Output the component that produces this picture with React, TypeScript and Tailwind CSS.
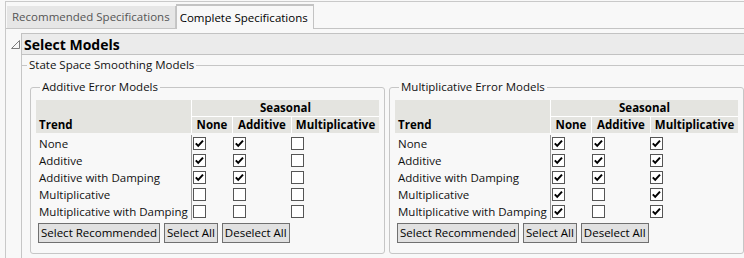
import React from 'react'

type Row = { trend: string; checks: [boolean, boolean, boolean] }

const ADDITIVE: Row[] = [
  { trend: 'None', checks: [true, true, false] },
  { trend: 'Additive', checks: [true, true, false] },
  { trend: 'Additive with Damping', checks: [true, true, false] },
  { trend: 'Multiplicative', checks: [false, false, false] },
  { trend: 'Multiplicative with Damping', checks: [false, false, false] },
]

const MULTIPLICATIVE: Row[] = [
  { trend: 'None', checks: [true, true, true] },
  { trend: 'Additive', checks: [true, true, true] },
  { trend: 'Additive with Damping', checks: [true, true, true] },
  { trend: 'Multiplicative', checks: [true, false, true] },
  { trend: 'Multiplicative with Damping', checks: [true, false, true] },
]

function Checkbox({ checked }: { checked: boolean }) {
  return (
    <span className="flex h-[13px] w-[13px] items-center justify-center border border-[#555] bg-white">
      {checked && (
        <svg width="11" height="11" viewBox="0 0 11 11">
          <path d="M1.8 5.4 L4.2 7.9 L9 2.6" fill="none" stroke="#000" strokeWidth="2" />
        </svg>
      )}
    </span>
  )
}

function Button({ label }: { label: string }) {
  return (
    <button className="flex h-[20px] items-center border border-[#707070] bg-[#e1e1e1] px-[2px] leading-none text-black">
      {label}
    </button>
  )
}

function ModelGroup({ title, rows }: { title: string; rows: Row[] }) {
  return (
    <fieldset className="w-[355px] rounded-[3px] border border-[#c6c6c6] px-[5px] pb-[10px]">
      <legend className="ml-[4px] px-[2px] leading-[16px]">{title}</legend>

      <div className="mt-[5px] grid grid-cols-[155px_40px_58px_87px] grid-rows-[16px_16px] gap-px bg-white font-bold text-[11.5px] leading-[16px] text-black">
        <div className="row-span-2 flex items-end bg-[#e4e4e0] pl-[3px]">Trend</div>
        <div className="col-span-3 bg-[#e4e4e0] text-center">Seasonal</div>
        <div className="bg-[#e4e4e0] text-center">None</div>
        <div className="bg-[#e4e4e0] text-center">Additive</div>
        <div className="bg-[#e4e4e0] text-center">Multiplicative</div>
      </div>

      <div className="mt-[2px]">
        {rows.map((row) => (
          <div key={row.trend} className="flex h-[17px] items-center">
            <div className="h-full w-[156px] border-r border-[#9a9a9a] pl-[3px] leading-[17px] whitespace-nowrap">
              {row.trend}
            </div>
            <div className="w-[41px] pl-[1px]">
              <Checkbox checked={row.checks[0]} />
            </div>
            <div className="w-[58px]">
              <Checkbox checked={row.checks[1]} />
            </div>
            <div>
              <Checkbox checked={row.checks[2]} />
            </div>
          </div>
        ))}
      </div>

      <div className="mt-[3px] ml-[2px] flex gap-[4px]">
        <Button label="Select Recommended" />
        <Button label="Select All" />
        <Button label="Deselect All" />
      </div>
    </fieldset>
  )
}

export default function App() {
  return (
    <div className="h-[258px] w-[744px] overflow-hidden bg-[#f8f8f8] font-['Open_Sans',sans-serif] text-[11.5px] text-[#111]">
      <div className="mt-px ml-[5px] h-[300px] border-t border-l border-[#c9c9c9]">
        {/* tabs */}
        <div className="flex h-[27px] items-end border-b border-[#c4c4c4]">
          <div className="ml-px flex h-[22px] items-center border-r border-[#c6c6c6] bg-[#e6e6e6] px-[5px] text-[#555]">
            Recommended Specifications
          </div>
          <div className="-mb-px flex h-[25px] items-center border-x border-t-2 border-[#c3c3c3] bg-[#f8f8f8] pr-[5px] pl-[3px] text-black">
            Complete Specifications
          </div>
        </div>

        {/* outline */}
        <div className="pt-[4px]">
          <div className="flex h-[22px]">
            <div className="flex w-[15px] items-center pl-[5px]">
              <svg width="9" height="9" viewBox="0 0 9 9">
                <path d="M8.5 0.5 L8.5 8.5 L0.5 8.5 Z" fill="none" stroke="#7c7c7c" strokeWidth="1" />
              </svg>
            </div>
            <div className="flex flex-1 items-center border-y border-l border-[#c2c2c2] bg-[#ebebeb] pl-[2px] text-[14px] font-bold text-black">
              Select Models
            </div>
          </div>

          <div className="ml-[15px] h-[220px] border-l border-[#c6c6c6] pt-[2px]">
            <fieldset className="w-[760px] border-t border-[#c6c6c6]">
              <legend className="ml-[5px] px-[2px] leading-[16px]">State Space Smoothing Models</legend>
              <div className="mt-[6px] flex gap-[4px] pl-[8px]">
                <ModelGroup title="Additive Error Models" rows={ADDITIVE} />
                <ModelGroup title="Multiplicative Error Models" rows={MULTIPLICATIVE} />
              </div>
            </fieldset>
          </div>
        </div>
      </div>
    </div>
  )
}
